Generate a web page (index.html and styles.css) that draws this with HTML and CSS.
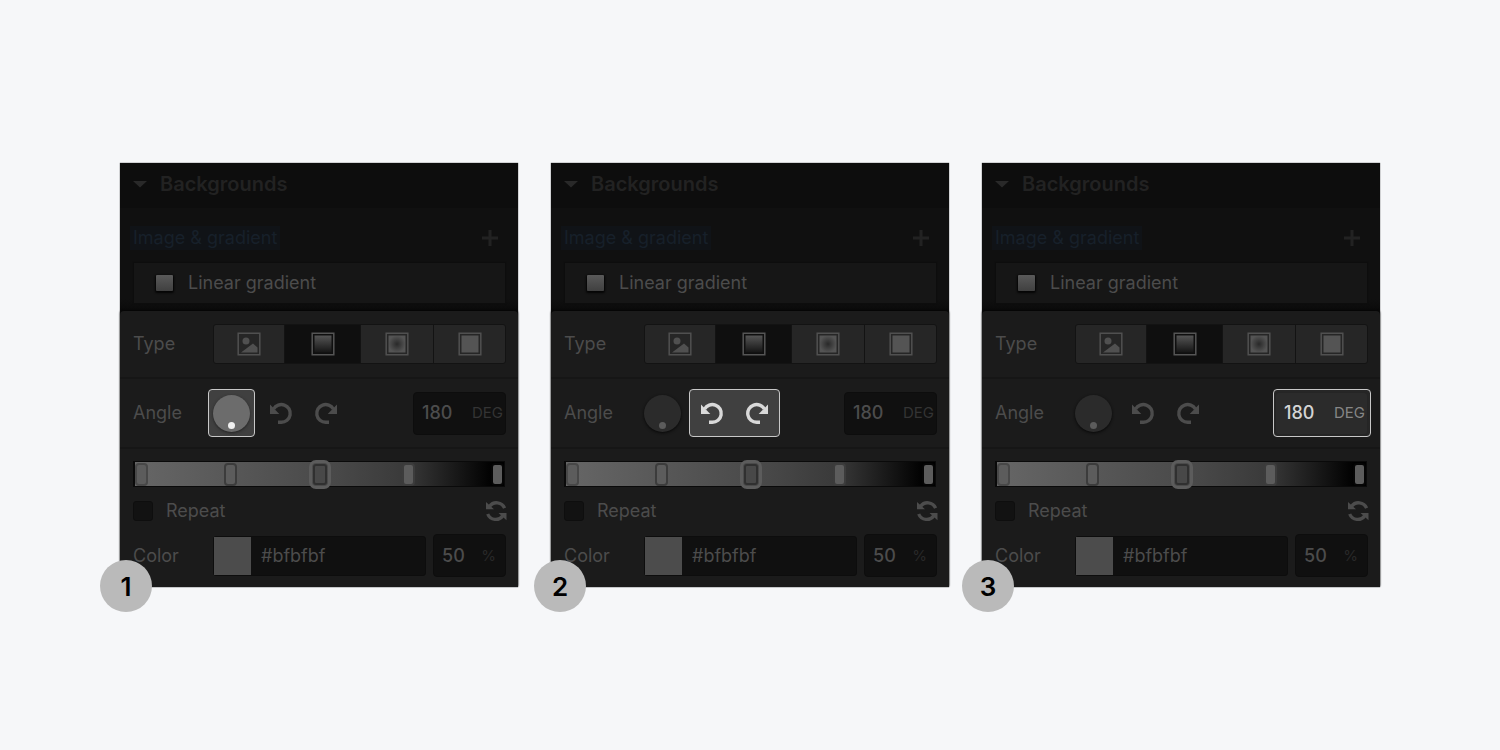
FILE: index.html
```html
<!DOCTYPE html>
<html lang="en">
<head>
<meta charset="utf-8">
<title>Gradient angle controls</title>
<link rel="stylesheet" href="styles.css">
</head>
<body>
<svg class="defs" aria-hidden="true">
  <defs>
    <linearGradient id="fade" x1="0" y1="0" x2="0" y2="1"><stop offset="0" stop-color="#555"/><stop offset="1" stop-color="#151515"/></linearGradient>
    <radialGradient id="glow"><stop offset="0" stop-color="#292929"/><stop offset="1" stop-color="#545454"/></radialGradient>
  </defs>
  <symbol id="image" viewBox="0 0 24 24"><path d="M1.200 1.200h21.600v21.600H1.200z" fill="none" stroke="#505050" stroke-width="1.500"/><circle cx="9" cy="9" r="3.500" fill="#505050"/><path d="M4 20.500 16 11.500l4.500 4v5z" fill="#505050"/></symbol>
  <symbol id="linear" viewBox="0 0 24 24"><path d="M1.200 1.200h21.600v21.600H1.200z" fill="none" stroke="#555" stroke-width="1.500"/><path d="M3.500 3.500h17v17h-17z" fill="url(#fade)"/></symbol>
  <symbol id="radial" viewBox="0 0 24 24"><path d="M1.200 1.200h21.600v21.600H1.200z" fill="none" stroke="#505050" stroke-width="1.500"/><path d="M3.500 3.500h17v17h-17z" fill="url(#glow)"/></symbol>
  <symbol id="solid" viewBox="0 0 24 24"><path d="M1.200 1.200h21.600v21.600H1.200z" fill="none" stroke="#505050" stroke-width="1.500"/><path d="M3.500 3.500h17v17h-17z" fill="#545454"/></symbol>
  <symbol id="undo" viewBox="0 0 24 24"><path d="M4.600 8A8.900 8.900 0 1 1 12.300 21.300H9" fill="none" stroke="currentColor" stroke-width="3.400"/><path d="M1 3.500V13h9.300z" fill="currentColor"/></symbol>
  <symbol id="refresh" viewBox="0 0 24 24"><path d="M4.500 7.500A8.600 8.600 0 0 1 19.600 9.200M2.700 15A8.600 8.600 0 0 0 17.800 16.700" fill="none" stroke="currentColor" stroke-width="3.300"/><path d="M1 3v7.300h8zM21.500 21.200v-7.300h-8z" fill="currentColor"/></symbol>
  <symbol id="plus" viewBox="0 0 18 18"><path d="M9 1v16M1 9h16" stroke="currentColor" stroke-width="3"/></symbol>
  <symbol id="caret" viewBox="0 0 14 8"><path d="M0 1h14L7 7.500z" fill="currentColor"/></symbol>
</svg>
<main class="stage">

  <section class="panel" aria-label="Step 1">
    <h2 class="panel-title"><svg class="caret"><use href="#caret"/></svg>Backgrounds</h2>
    <div class="layers">
      <div class="layers-head"><span class="tag">Image &amp; gradient</span><button class="add" aria-label="Add"><svg class="plus"><use href="#plus"/></svg></button></div>
      <button class="layer"><span class="thumb"></span>Linear gradient</button>
    </div>
    <div class="editor">
      <div class="row row-type">
        <span class="label">Type</span>
        <div class="segments">
          <button class="segment" aria-label="Image"><svg class="icon"><use href="#image"/></svg></button>
          <button class="segment active" aria-label="Linear"><svg class="icon"><use href="#linear"/></svg></button>
          <button class="segment" aria-label="Radial"><svg class="icon"><use href="#radial"/></svg></button>
          <button class="segment" aria-label="Solid"><svg class="icon"><use href="#solid"/></svg></button>
        </div>
      </div>
      <div class="row row-angle">
        <label class="label" for="angle1">Angle</label>
        <div class="angle">
          <div class="focus dial-box lit"><button class="dial" aria-label="Angle dial"></button></div>
          <div class="focus turns"><button class="turn" aria-label="Rotate left"><svg class="icon"><use href="#undo"/></svg></button><button class="turn" aria-label="Rotate right"><svg class="icon flip"><use href="#undo"/></svg></button></div>
          <div class="focus degrees"><div class="field"><input class="number" id="angle1" value="180"><span class="unit">DEG</span></div></div>
        </div>
      </div>
      <div class="stops-area">
        <div class="ramp"><button class="stop" aria-label="Stop 1"></button><button class="stop" aria-label="Stop 2"></button><button class="stop selected" aria-label="Stop 3"></button><button class="stop" aria-label="Stop 4"></button><button class="stop" aria-label="Stop 5"></button></div>
        <div class="repeat-row"><input class="check" type="checkbox" id="repeat1"><label class="label" for="repeat1">Repeat</label><button class="swap" aria-label="Reverse"><svg class="icon"><use href="#refresh"/></svg></button></div>
        <div class="color-row"><label class="label" for="color1">Color</label><div class="hex-field"><span class="swatch"></span><input class="hex" id="color1" value="#bfbfbf"></div><div class="field alpha"><input class="number" value="50" aria-label="Opacity"><span class="unit dim">%</span></div></div>
      </div>
    </div>
    <span class="badge">1</span>
  </section>

  <section class="panel" aria-label="Step 2">
    <h2 class="panel-title"><svg class="caret"><use href="#caret"/></svg>Backgrounds</h2>
    <div class="layers">
      <div class="layers-head"><span class="tag">Image &amp; gradient</span><button class="add" aria-label="Add"><svg class="plus"><use href="#plus"/></svg></button></div>
      <button class="layer"><span class="thumb"></span>Linear gradient</button>
    </div>
    <div class="editor">
      <div class="row row-type">
        <span class="label">Type</span>
        <div class="segments">
          <button class="segment" aria-label="Image"><svg class="icon"><use href="#image"/></svg></button>
          <button class="segment active" aria-label="Linear"><svg class="icon"><use href="#linear"/></svg></button>
          <button class="segment" aria-label="Radial"><svg class="icon"><use href="#radial"/></svg></button>
          <button class="segment" aria-label="Solid"><svg class="icon"><use href="#solid"/></svg></button>
        </div>
      </div>
      <div class="row row-angle">
        <label class="label" for="angle2">Angle</label>
        <div class="angle">
          <div class="focus dial-box"><button class="dial" aria-label="Angle dial"></button></div>
          <div class="focus turns lit"><button class="turn" aria-label="Rotate left"><svg class="icon"><use href="#undo"/></svg></button><button class="turn" aria-label="Rotate right"><svg class="icon flip"><use href="#undo"/></svg></button></div>
          <div class="focus degrees"><div class="field"><input class="number" id="angle2" value="180"><span class="unit">DEG</span></div></div>
        </div>
      </div>
      <div class="stops-area">
        <div class="ramp"><button class="stop" aria-label="Stop 1"></button><button class="stop" aria-label="Stop 2"></button><button class="stop selected" aria-label="Stop 3"></button><button class="stop" aria-label="Stop 4"></button><button class="stop" aria-label="Stop 5"></button></div>
        <div class="repeat-row"><input class="check" type="checkbox" id="repeat2"><label class="label" for="repeat2">Repeat</label><button class="swap" aria-label="Reverse"><svg class="icon"><use href="#refresh"/></svg></button></div>
        <div class="color-row"><label class="label" for="color2">Color</label><div class="hex-field"><span class="swatch"></span><input class="hex" id="color2" value="#bfbfbf"></div><div class="field alpha"><input class="number" value="50" aria-label="Opacity"><span class="unit dim">%</span></div></div>
      </div>
    </div>
    <span class="badge badge-inset">2</span>
  </section>

  <section class="panel" aria-label="Step 3">
    <h2 class="panel-title"><svg class="caret"><use href="#caret"/></svg>Backgrounds</h2>
    <div class="layers">
      <div class="layers-head"><span class="tag">Image &amp; gradient</span><button class="add" aria-label="Add"><svg class="plus"><use href="#plus"/></svg></button></div>
      <button class="layer"><span class="thumb"></span>Linear gradient</button>
    </div>
    <div class="editor">
      <div class="row row-type">
        <span class="label">Type</span>
        <div class="segments">
          <button class="segment" aria-label="Image"><svg class="icon"><use href="#image"/></svg></button>
          <button class="segment active" aria-label="Linear"><svg class="icon"><use href="#linear"/></svg></button>
          <button class="segment" aria-label="Radial"><svg class="icon"><use href="#radial"/></svg></button>
          <button class="segment" aria-label="Solid"><svg class="icon"><use href="#solid"/></svg></button>
        </div>
      </div>
      <div class="row row-angle">
        <label class="label" for="angle3">Angle</label>
        <div class="angle">
          <div class="focus dial-box"><button class="dial" aria-label="Angle dial"></button></div>
          <div class="focus turns"><button class="turn" aria-label="Rotate left"><svg class="icon"><use href="#undo"/></svg></button><button class="turn" aria-label="Rotate right"><svg class="icon flip"><use href="#undo"/></svg></button></div>
          <div class="focus degrees lit"><div class="field"><input class="number" id="angle3" value="180"><span class="unit">DEG</span></div></div>
        </div>
      </div>
      <div class="stops-area">
        <div class="ramp"><button class="stop" aria-label="Stop 1"></button><button class="stop" aria-label="Stop 2"></button><button class="stop selected" aria-label="Stop 3"></button><button class="stop" aria-label="Stop 4"></button><button class="stop" aria-label="Stop 5"></button></div>
        <div class="repeat-row"><input class="check" type="checkbox" id="repeat3"><label class="label" for="repeat3">Repeat</label><button class="swap" aria-label="Reverse"><svg class="icon"><use href="#refresh"/></svg></button></div>
        <div class="color-row"><label class="label" for="color3">Color</label><div class="hex-field"><span class="swatch"></span><input class="hex" id="color3" value="#bfbfbf"></div><div class="field alpha"><input class="number" value="50" aria-label="Opacity"><span class="unit dim">%</span></div></div>
      </div>
    </div>
    <span class="badge">3</span>
  </section>

</main>
</body>
</html>
```

FILE: styles.css
```css
* { box-sizing: border-box; }
body {
  margin: 0;
  background: #f6f7f9;
  font-family: Inter, "Liberation Sans", sans-serif;
  font-size: 18px;
  line-height: 24px;
}
button, input { font: inherit; color: inherit; margin: 0; padding: 0; border: 0; background: none; }
.defs { position: absolute; width: 0; height: 0; }
.stage {
  min-height: 100vh;
  display: grid;
  grid-template-columns: repeat(3, 1fr);
  gap: 33px;
  align-items: center;
  padding: 0 120px;
}
.panel { position: relative; background: #101010; color: #4c4c4c; box-shadow: 0 0 1px #222; }
.panel-title {
  display: flex;
  align-items: center;
  gap: 13px;
  margin: 0;
  padding: 9px 13px 12px;
  font-size: 20px;
  font-weight: 600;
  background: #0d0d0d;
  color: #222;
}
.caret { width: 14px; height: 8px; color: #292929; }
.layers { padding: 17px 13px 8px 14px; background: linear-gradient(#101010 88%, #0a0a0a); }
.layers-head { display: flex; justify-content: space-between; align-items: center; padding-right: 6px; height: 26px; }
.tag { margin-left: -4px; padding: 0 3px; background: #101317; color: #17202a; }
.add { display: flex; color: #222; }
.plus { width: 18px; height: 18px; }
.layer {
  display: flex;
  align-items: center;
  gap: 15px;
  width: 100%;
  height: 40px;
  margin-top: 12px;
  padding: 0 22px;
  background: #161616;
  box-shadow: 0 0 1px 1px #0d0d0d;
}
.thumb { width: 17px; height: 16px; border-radius: 1px; background: linear-gradient(#5a5a5a, #404040); box-shadow: 0 1px 2px 1px #050505; }
.editor { background: #1b1b1b; border-radius: 4px 4px 0 0; box-shadow: 0 -1px 2px #050505; }
.row { display: grid; grid-template-columns: 80px 1fr; align-items: center; padding: 0 12px 0 13px; border-bottom: 2px solid #161616; }
.row-type { height: 68px; }
.row-angle { height: 70px; }
.segments { display: grid; grid-template-columns: 71fr 76fr 73fr 71fr; height: 40px; border: 1px solid #131313; border-radius: 3px; background: #262626; }
.segment { display: flex; align-items: center; justify-content: center; border-right: 1px solid #131313; }
.segment:last-child { border-right: 0; }
.segment.active { background: #0f0f0f; }
.icon { display: block; width: 24px; height: 24px; }
.flip { transform: scaleX(-1); }
.angle { display: flex; align-items: center; gap: 3px; margin: 0 -3px 0 -5px; }
.focus { display: flex; align-items: center; height: 48px; border: 1px solid transparent; border-radius: 4px; }
.dial-box { width: 47px; justify-content: center; }
.dial { display: flex; justify-content: center; align-items: flex-end; width: 37px; height: 37px; padding-bottom: 3px; border-radius: 50%; background: #2b2b2b; box-shadow: 0 1px 3px #080808; }
.dial::after { content: ""; width: 7px; height: 7px; border-radius: 50%; background: #5c5c5c; }
.turns { gap: 21px; padding: 0 10px; }
.turn { color: #4c4c4c; }
.degrees { width: 98px; margin-left: auto; padding: 0 1px; }
.field { display: flex; align-items: center; width: 93px; height: 43px; padding: 0 2px 0 8px; border: 1px solid #0d0d0d; border-radius: 4px; background: #101010; }
.number { flex: 1; width: 0; min-width: 0; font-weight: 500; }
.unit { font-size: 15px; color: #343434; }
.dim { color: #292929; }
.lit { border-color: #c8c8c8; background: #404040; }
.lit .dial { background: #6c6c6c; box-shadow: 0 1px 3px #222; }
.lit .dial::after { background: #f0f0f0; }
.lit .turn { color: #d9d9d9; }
.degrees.lit { background: #262626; }
.lit .field { border-color: #252525; background: #2b2b2b; color: #d4d4d4; }
.lit .unit { color: #868686; }
.stops-area { padding: 12px 12px 10px 13px; }
.ramp { display: flex; justify-content: space-between; align-items: center; height: 26px; margin-right: 1px; border: 1px solid #0a0a0a; border-left-width: 2px; background: linear-gradient(90deg, #666, #505050 40%, #484848 55%, #3a3a3a 73%, #000 97%); }
.stop { width: 13px; height: 23px; border: 2px solid #3c3c3c; border-radius: 4px; background: #5c5c5c; }
.stop:first-child { border-color: #484848; }
.stop:last-child { border-color: #050505; }
.stop.selected { width: 14px; height: 21px; border: 2px solid #303030; border-radius: 3px; background: #484848; outline: 3px solid #5c5c5c; outline-offset: 1px; }
.repeat-row { display: flex; align-items: center; gap: 13px; height: 47px; }
.check { appearance: none; width: 20px; height: 20px; border: 1px solid #0e0e0e; border-radius: 3px; background: #121212; }
.swap { margin-left: auto; margin-right: -3px; }
.color-row { display: grid; grid-template-columns: 80px 1fr 73px; align-items: center; }
.hex-field { display: flex; height: 40px; margin-right: 7px; border: 1px solid #0d0d0d; border-radius: 3px; background: #101010; }
.swatch { width: 37px; background: #4c4c4c; }
.hex { flex: 1; min-width: 0; width: 0; padding-left: 10px; }
.alpha { width: 73px; padding: 0 9px 0 8px; }
.badge {
  position: absolute;
  left: -20px;
  bottom: -25px;
  display: flex;
  align-items: center;
  justify-content: center;
  width: 52px;
  height: 52px;
  padding-top: 2px;
  border-radius: 50%;
  background: #bababa;
  color: #000;
  font-size: 26px;
  font-weight: 600;
}
.badge-inset { left: -17px; }
```
